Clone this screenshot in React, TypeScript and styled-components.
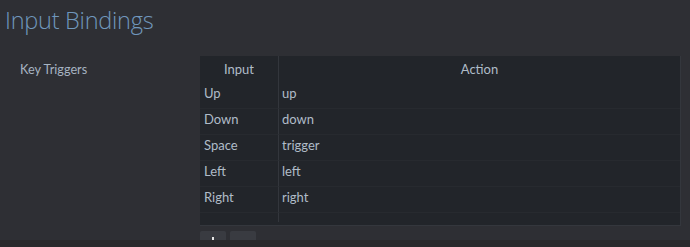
import { Fragment } from "react";
import styled, { createGlobalStyle } from "styled-components";

const GlobalStyle = createGlobalStyle`
  html, body {
    margin: 0;
    padding: 0;
    background: #2a2a2c;
  }
  * {
    box-sizing: border-box;
  }
`;

const bindings = [
  { input: "Up", action: "up" },
  { input: "Down", action: "down" },
  { input: "Space", action: "trigger" },
  { input: "Left", action: "left" },
  { input: "Right", action: "right" },
];

const Page = styled.div`
  width: 690px;
  height: 247px;
  display: flex;
  flex-direction: column;
  font-family: "Source Sans Pro", Lato, "Noto Sans", sans-serif;
`;

const Main = styled.div`
  height: 240px;
  overflow: hidden;
  background: #2e2f34;
`;

const Footer = styled.div`
  flex: 1;
  background: #29292b;
`;

const Title = styled.h1`
  margin: 0;
  padding: 4px 0 0 5px;
  height: 44px;
  font-family: "Open Sans", sans-serif;
  font-weight: 300;
  font-size: 23.5px;
  letter-spacing: -0.25px;
  color: #7097bc;
`;

const Section = styled.div`
  display: flex;
  padding-top: 12px;
`;

const Label = styled.div`
  width: 200px;
  padding: 5px 0 0 20px;
  font-size: 12.7px;
  color: #a6b3c1;
`;

const TableWrap = styled.div`
  width: 481px;
  display: flex;
  flex-direction: column;
  gap: 5px;
`;

const Table = styled.div`
  height: 170px;
  background: #22252a;
  border-right: 1px solid #34373d;
  border-bottom: 1px solid #34373d;
  display: grid;
  grid-template-columns: 79px 1fr;
  grid-template-rows: 27px repeat(5, 26px) 1fr;
  font-size: 13px;
  color: #b0bcc8;
`;

const HeadCell = styled.div<{ $first?: boolean }>`
  display: flex;
  align-items: center;
  justify-content: center;
  padding-bottom: 1px;
  border-right: ${(p) => (p.$first ? "1px solid #33363c" : "none")};
`;

const Cell = styled.div<{ $first?: boolean }>`
  display: flex;
  align-items: center;
  padding: 0 0 5px ${(p) => (p.$first ? "4px" : "3px")};
  border-bottom: 1px solid #272a2f;
  border-right: ${(p) => (p.$first ? "1px solid #33363c" : "none")};
`;

const Filler = styled.div<{ $first?: boolean }>`
  border-right: ${(p) => (p.$first ? "1px solid #33363c" : "none")};
  margin-bottom: 3px;
`;

const Buttons = styled.div`
  display: flex;
  gap: 4px;
`;

const Button = styled.div`
  width: 26px;
  height: 22px;
  border-radius: 2px;
  background: #393b41;
  display: flex;
  justify-content: center;
  padding-top: 6px;
`;

const PlusIcon = () => (
  <svg width="8" height="8" viewBox="0 0 8 8">
    <path d="M4 0v8M0 4h8" stroke="#e6e6e6" strokeWidth="2" />
  </svg>
);

export default function App() {
  return (
    <>
      <GlobalStyle />
      <Page>
        <Main>
          <Title>Input Bindings</Title>
          <Section>
            <Label>Key Triggers</Label>
            <TableWrap>
              <Table>
                <HeadCell $first>Input</HeadCell>
                <HeadCell>Action</HeadCell>
                {bindings.map((b) => (
                  <Fragment key={b.input}>
                    <Cell $first>{b.input}</Cell>
                    <Cell>{b.action}</Cell>
                  </Fragment>
                ))}
                <Filler $first />
                <Filler />
              </Table>
              <Buttons>
                <Button>
                  <PlusIcon />
                </Button>
                <Button />
              </Buttons>
            </TableWrap>
          </Section>
        </Main>
        <Footer />
      </Page>
    </>
  );
}
